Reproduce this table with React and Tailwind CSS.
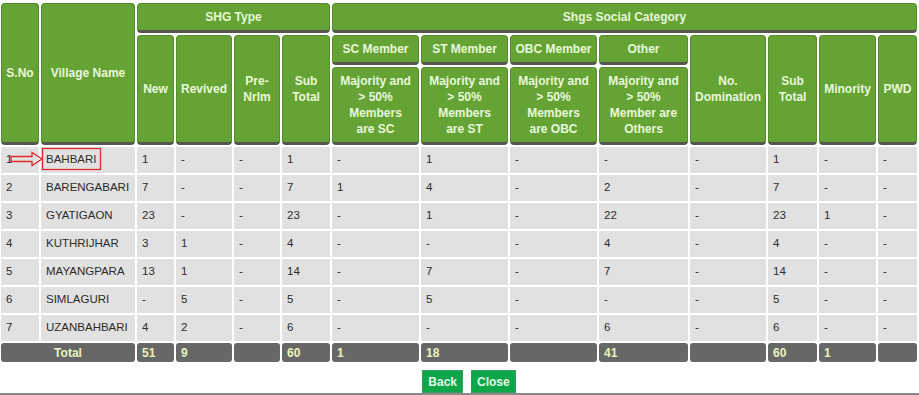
import React from "react";

const rows = [
  ["1", "BAHBARI", "1", "-", "-", "1", "-", "1", "-", "-", "-", "1", "-", "-"],
  ["2", "BARENGABARI", "7", "-", "-", "7", "1", "4", "-", "2", "-", "7", "-", "-"],
  ["3", "GYATIGAON", "23", "-", "-", "23", "-", "1", "-", "22", "-", "23", "1", "-"],
  ["4", "KUTHRIJHAR", "3", "1", "-", "4", "-", "-", "-", "4", "-", "4", "-", "-"],
  ["5", "MAYANGPARA", "13", "1", "-", "14", "-", "7", "-", "7", "-", "14", "-", "-"],
  ["6", "SIMLAGURI", "-", "5", "-", "5", "-", "5", "-", "-", "-", "5", "-", "-"],
  ["7", "UZANBAHBARI", "4", "2", "-", "6", "-", "-", "-", "6", "-", "6", "-", "-"],
];

const totals = ["51", "9", "", "60", "1", "18", "", "41", "", "60", "1", ""];

const widths = [38, 94, 37, 56, 46, 48, 87, 87, 87, 89, 76, 49, 57, 39];

const th =
  "bg-[#65a334] border border-[#568c2e] border-b-[3px] border-b-[#555555] rounded-[4px] text-[#e8f8da] font-bold text-[12px] leading-[16px] text-center align-middle px-[1px]";

const td =
  "bg-[#e1e1e1] text-[#2b2b2b] text-[11.5px] pl-[5px] align-middle whitespace-nowrap";

const tot =
  "bg-[#676767] rounded-[3px] text-[#eaf5bd] font-bold text-[12px] align-middle";

export default function App() {
  return (
    <div className="w-[919px] h-[395px] bg-white overflow-hidden font-['Liberation_Sans',Arial,sans-serif] flex flex-col">
      <div className="relative">
        <table className="table-fixed border-separate border-spacing-[2px] w-[920px] ml-[-1px] mt-px">
          <colgroup>
            {widths.map((w, i) => (
              <col key={i} style={{ width: w }} />
            ))}
          </colgroup>
          <thead>
            <tr className="h-[30px]">
              <th rowSpan={3} className={th}>S.No</th>
              <th rowSpan={3} className={th}>Village Name</th>
              <th colSpan={4} className={th}>SHG Type</th>
              <th colSpan={8} className={th}>Shgs Social Category</th>
            </tr>
            <tr className="h-[30px]">
              <th rowSpan={2} className={th}>New</th>
              <th rowSpan={2} className={th}>Revived</th>
              <th rowSpan={2} className={th}>Pre-<br />Nrlm</th>
              <th rowSpan={2} className={th}>Sub<br />Total</th>
              <th className={th}>SC Member</th>
              <th className={th}>ST Member</th>
              <th className={th}>OBC Member</th>
              <th className={th}>Other</th>
              <th rowSpan={2} className={th}>No.<br />Domination</th>
              <th rowSpan={2} className={th}>Sub<br />Total</th>
              <th rowSpan={2} className={th}>Minority</th>
              <th rowSpan={2} className={th}>PWD</th>
            </tr>
            <tr className="h-[78px]">
              <th className={th}>Majority and<br />&gt; 50%<br />Members<br />are SC</th>
              <th className={th}>Majority and<br />&gt; 50%<br />Members<br />are ST</th>
              <th className={th}>Majority and<br />&gt; 50%<br />Members<br />are OBC</th>
              <th className={th}>Majority and<br />&gt; 50%<br />Member are<br />Others</th>
            </tr>
          </thead>
          <tbody>
            {rows.map((r) => (
              <tr key={r[0]} className="h-[26px]">
                {r.map((c, i) => (
                  <td key={i} className={td}>
                    {c}
                  </td>
                ))}
              </tr>
            ))}
            <tr className="h-[19px]">
              <td colSpan={2} className={tot + " text-center"}>
                Total
              </td>
              {totals.map((t, i) => (
                <td key={i} className={tot + " pl-[5px]"}>
                  {t}
                </td>
              ))}
            </tr>
          </tbody>
        </table>

        {/* red arrow + box marking the first village */}
        <svg
          className="absolute left-0 top-0 pointer-events-none"
          width="110"
          height="175"
        >
          <polygon
            points="11,156.5 32,156.5 32,152.5 42,159 32,165.5 32,161.5 11,161.5"
            fill="none"
            stroke="#e02b2b"
            strokeWidth="1.3"
          />
          <rect
            x="42.5"
            y="148.5"
            width="58"
            height="21"
            fill="none"
            stroke="#e02b2b"
            strokeWidth="1.3"
          />
        </svg>
      </div>

      <div className="flex justify-center gap-[8px] mt-[6px] pl-[19px]">
        <button className="h-[23px] px-[5px] bg-[#0da64a] border border-[#3c9a5c] text-[#e6f8e2] font-bold text-[12px]">
          Back
        </button>
        <button className="h-[23px] px-[5px] bg-[#0da64a] border border-[#3c9a5c] text-[#e6f8e2] font-bold text-[12px]">
          Close
        </button>
      </div>

      <div className="h-[4px] bg-[#8a8a8a] mt-auto" />
    </div>
  );
}
